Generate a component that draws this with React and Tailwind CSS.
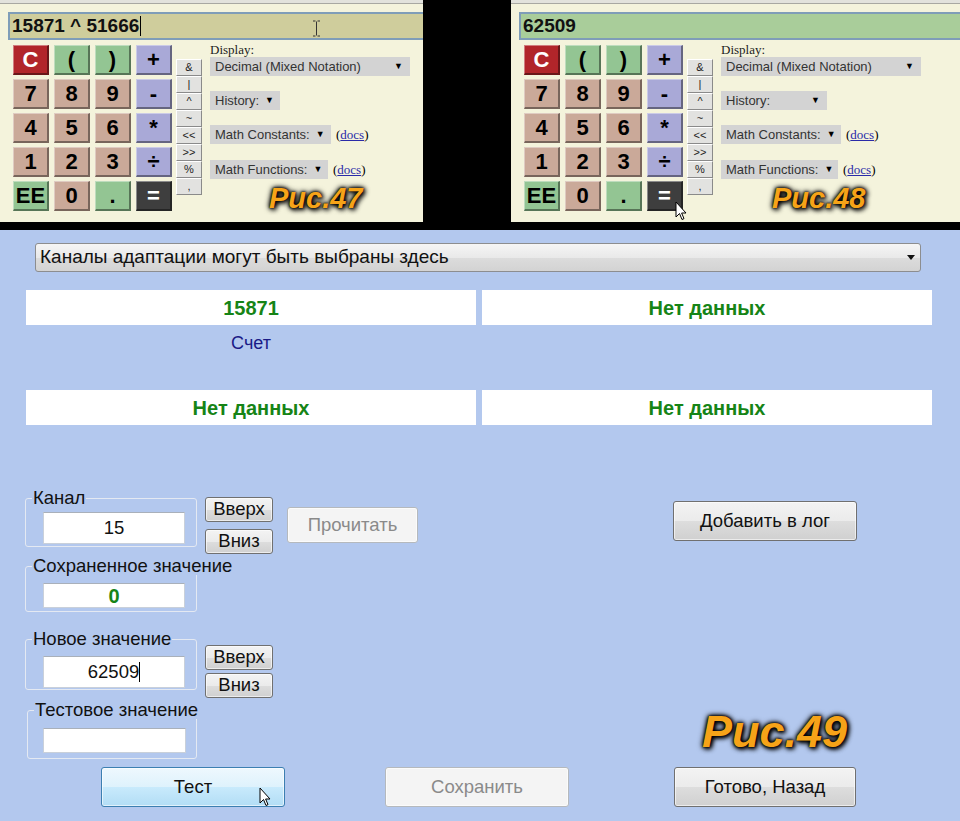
import React from "react";

const calcRows = [
  [["C", "red"], ["(", "green"], [")", "green"], ["+", "blue"]],
  [["7", "tan"], ["8", "tan"], ["9", "tan"], ["-", "blue"]],
  [["4", "tan"], ["5", "tan"], ["6", "tan"], ["*", "blue"]],
  [["1", "tan"], ["2", "tan"], ["3", "tan"], ["÷", "blue"]],
  [["EE", "green"], ["0", "tan"], [".", "green"], ["=", "dark"]],
];

const colorCls = {
  red: "bg-[#b1252a] text-white",
  green: "bg-[#93c593] text-black",
  tan: "bg-[#caa999] text-black",
  blue: "bg-[#a9a9d7] text-black",
  dark: "bg-[#3e3e3e] text-white",
};

const smallKeys = ["&", "|", "^", "~", "<<", ">>", "%", ","];

function Pointer({ className }) {
  return (
    <svg className={className} width="13" height="21" viewBox="0 0 13 21">
      <path
        d="M1 1 L1 16 L4.5 12.5 L7 18.5 L9 17.6 L6.6 12 L11 12 Z"
        fill="#fff"
        stroke="#000"
        strokeWidth="1"
      />
    </svg>
  );
}

function Fig({ children, className }) {
  return (
    <div
      className={`font-bold italic leading-none text-[#f6a318] [text-shadow:0_0_2px_#000,0_0_4px_#000,0_0_6px_#000,2px_2px_5px_#000] ${className}`}
    >
      {children}
    </div>
  );
}

function Sel({ label, w }) {
  return (
    <div
      className={`h-[19px] bg-[#d3d3d3] flex items-center justify-between gap-[6px] pl-[5px] pr-[7px] text-[13px] whitespace-nowrap text-[#333] ${w}`}
    >
      <span>{label}</span>
      <span className="shrink-0 text-[9px] text-black">▼</span>
    </div>
  );
}

function Docs() {
  return (
    <span className="ml-[5px] text-[13px] font-['Liberation_Serif',serif] whitespace-nowrap text-black">
      (<span className="text-[#2a2aa8] underline">docs</span>)
    </span>
  );
}

function CalcPanel({ className, display, displayBg, historyW, mcW, mfW, fig, figLeft, children }) {
  return (
    <div className={`relative h-[222px] bg-[#f4f3dc] flex flex-col overflow-hidden ${className}`}>
      <div className="h-[4px] bg-[#e2e2dc] border-b border-[#a8a8a2]" />
      <div
        className={`mt-[8px] ml-[8px] h-[28px] border-2 border-r-0 border-[#7f9db8] flex items-center pl-[2px] text-[19px] font-bold text-[#111] ${displayBg}`}
      >
        {display}
      </div>
      <div className="mt-[5px] pl-[13px] flex items-start">
        <div className="grid grid-cols-[repeat(4,36px)] gap-x-[5px] gap-y-[4px]">
          {calcRows.flat().map(([k, c], i) => (
            <div
              key={i}
              className={`h-[30px] flex items-center justify-center font-bold text-[22px] leading-none border-t border-l border-r-2 border-b-2 border-t-white/40 border-l-white/40 border-r-black/40 border-b-black/40 ${colorCls[c]}`}
            >
              {k}
            </div>
          ))}
        </div>
        <div className="ml-[4px] mt-[14px] w-[26px] flex flex-col">
          {smallKeys.map((k) => (
            <div
              key={k}
              className="h-[17px] bg-[#e2e2e0] border border-t-white border-l-white border-r-[#8a8a8a] border-b-[#8a8a8a] flex items-center justify-center text-[11px] leading-none text-[#222]"
            >
              {k}
            </div>
          ))}
        </div>
        <div className="ml-[8px] -mt-[2px] flex flex-col">
          <div className="h-[14px] leading-[14px] text-[13px] font-['Liberation_Serif',serif] text-[#222]">Display:</div>
          <Sel label="Decimal (Mixed Notation)" w="w-[200px]" />
          <div className="mt-[15px] flex">
            <Sel label="History:" w={historyW} />
          </div>
          <div className="mt-[15px] flex items-center">
            <Sel label="Math Constants:" w={mcW} />
            <Docs />
          </div>
          <div className="mt-[15px] flex items-center">
            <Sel label="Math Functions:" w={mfW} />
            <Docs />
          </div>
        </div>
      </div>
      <Fig className={`absolute top-[184px] text-[29px] ${figLeft}`}>{fig}</Fig>
      {children}
    </div>
  );
}

function Box({ children }) {
  return (
    <div className="w-[450px] h-[35px] bg-white flex items-center justify-center text-[20px] font-bold text-[#168416]">
      {children}
    </div>
  );
}

function WinBtn({ children, className = "", disabled, hover }) {
  let cls =
    "border-[#707070] bg-[linear-gradient(#f3f3f3_0%,#ebebeb_50%,#dddddd_51%,#d0d0d0_100%)] text-[#111]";
  if (disabled) cls = "border-[#b5b9bd] bg-[#f4f4f4] text-[#8a8a8a]";
  if (hover)
    cls =
      "border-[#3c7fb1] bg-[linear-gradient(#eef8fe_0%,#def2fc_50%,#c8eafc_51%,#b2ddf5_100%)] text-[#111]";
  return (
    <div
      className={`relative border rounded-[3px] flex items-center justify-center text-[18.5px] leading-none shadow-[inset_0_0_0_1px_rgba(255,255,255,0.6)] ${cls} ${className}`}
    >
      {children}
    </div>
  );
}

function Field({ children, className = "" }) {
  return (
    <div
      className={`w-[142px] bg-white border border-[#c9d0da] border-t-[#a9b0ba] flex items-center justify-center text-[18.5px] text-[#111] ${className}`}
    >
      {children}
    </div>
  );
}

function Group({ legend, className = "", legendCls = "ml-[6px]", children }) {
  return (
    <fieldset className={`min-w-0 border border-[#e4e9f2] rounded-[3px] ${className}`}>
      <legend className={`px-[1px] text-[18.5px] leading-[18px] whitespace-nowrap text-[#111] ${legendCls}`}>
        {legend}
      </legend>
      {children}
    </fieldset>
  );
}

export default function App() {
  return (
    <div className="w-[960px] h-[821px] overflow-hidden font-['Liberation_Sans',Arial,sans-serif]">
      <div className="h-[230px] bg-black flex items-start">
        <CalcPanel
          className="w-[423px]"
          display={
            <span className="flex items-center">
              15871 ^ 51666
              <span className="inline-block w-[1px] h-[20px] bg-black ml-[1px]" />
            </span>
          }
          displayBg="bg-[#cfcd9c]"
          historyW="w-[70px]"
          mcW="w-[121px]"
          mfW="w-[118px]"
          fig="Рис.47"
          figLeft="left-[269px]"
        >
          <svg className="absolute left-[312px] top-[20px]" width="9" height="17" viewBox="0 0 9 17">
            <path d="M1 1 H3.5 M5.5 1 H8 M4.5 1.5 V15.5 M1 16 H3.5 M5.5 16 H8" stroke="#333" strokeWidth="1" fill="none" />
          </svg>
        </CalcPanel>
        <CalcPanel
          className="ml-[88px] w-[449px]"
          display="62509"
          displayBg="bg-[#a9cd9a]"
          historyW="w-[106px]"
          mcW="w-[120px]"
          mfW="w-[117px]"
          fig="Рис.48"
          figLeft="left-[261px]"
        >
          <Pointer className="absolute left-[164px] top-[201px]" />
        </CalcPanel>
      </div>

      <div className="bg-[#b3c8ee] h-[591px] flex flex-col">
        <div className="mt-[13px] ml-[35px] w-[886px] h-[29px] rounded-[3px] border border-[#8c8d8f] bg-[linear-gradient(#f5f5f5,#e9e9e9_50%,#dcdcdc_51%,#d3d3d3)] flex items-center justify-between pl-[4px] pr-[5px] text-[19px] text-[#111]">
          <span>Каналы адаптации могут быть выбраны здесь</span>
          <svg width="8" height="5" viewBox="0 0 8 5">
            <path d="M0 0 H8 L4 5 Z" fill="#111" />
          </svg>
        </div>

        <div className="mt-[18px] ml-[26px] flex gap-[6px]">
          <Box>15871</Box>
          <Box>Нет данных</Box>
        </div>
        <div className="ml-[26px] w-[450px] mt-[8px] text-center text-[18px] leading-[20px] text-[#1a1a86]">Счет</div>
        <div className="mt-[37px] ml-[26px] flex gap-[6px]">
          <Box>Нет данных</Box>
          <Box>Нет данных</Box>
        </div>

        {/* Row 1 */}
        <div className="mt-[64px] flex items-start">
          <Group legend="Канал" className="ml-[25px] w-[172px] pb-[2px]">
            <Field className="ml-[17px] mt-[5px] h-[32px]">15</Field>
          </Group>
          <div className="ml-[8px] mt-[8px] flex flex-col gap-[7px]">
            <WinBtn className="w-[68px] h-[25px]">Вверх</WinBtn>
            <WinBtn className="w-[68px] h-[25px]">Вниз</WinBtn>
          </div>
          <WinBtn disabled className="ml-[14px] mt-[18px] w-[131px] h-[36px]">Прочитать</WinBtn>
          <WinBtn className="ml-[255px] mt-[12px] w-[184px] h-[40px]">Добавить в лог</WinBtn>
        </div>

        {/* Row 2 */}
        <div className="mt-[3px] flex items-start">
          <Group legend="Сохраненное значение" className="ml-[25px] w-[172px] pb-[3px]">
            <Field className="ml-[17px] mt-[8px] h-[25px] font-bold text-[20px] text-[#168416]">0</Field>
          </Group>
        </div>

        {/* Row 3 */}
        <div className="mt-[18px] flex items-start">
          <Group legend="Новое значение" className="ml-[25px] w-[172px] pb-[1px]">
            <Field className="ml-[17px] mt-[8px] h-[32px]">
              <span className="flex items-center">
                62509
                <span className="inline-block w-[1px] h-[20px] bg-black" />
              </span>
            </Field>
          </Group>
          <div className="ml-[8px] mt-[15px] flex flex-col gap-[3px]">
            <WinBtn className="w-[68px] h-[25px]">Вверх</WinBtn>
            <WinBtn className="w-[68px] h-[25px]">Вниз</WinBtn>
          </div>
        </div>

        {/* Row 4 */}
        <div className="mt-[3px] flex items-start">
          <Group legend="Тестовое значение" className="ml-[27px] w-[170px] pb-[5px]">
            <Field className="ml-[15px] mt-[9px] h-[25px] w-[143px]" />
          </Group>
          <Fig className="ml-[505px] mt-[8px] text-[45px]">Рис.49</Fig>
        </div>

        {/* Row 5 */}
        <div className="mt-[8px] flex items-start">
          <WinBtn hover className="ml-[101px] w-[184px] h-[40px]">
            Тест
            <Pointer className="absolute left-[157px] top-[19px]" />
          </WinBtn>
          <WinBtn disabled className="ml-[100px] w-[184px] h-[40px]">Сохранить</WinBtn>
          <WinBtn className="ml-[105px] w-[182px] h-[40px]">Готово, Назад</WinBtn>
        </div>
      </div>
    </div>
  );
}
